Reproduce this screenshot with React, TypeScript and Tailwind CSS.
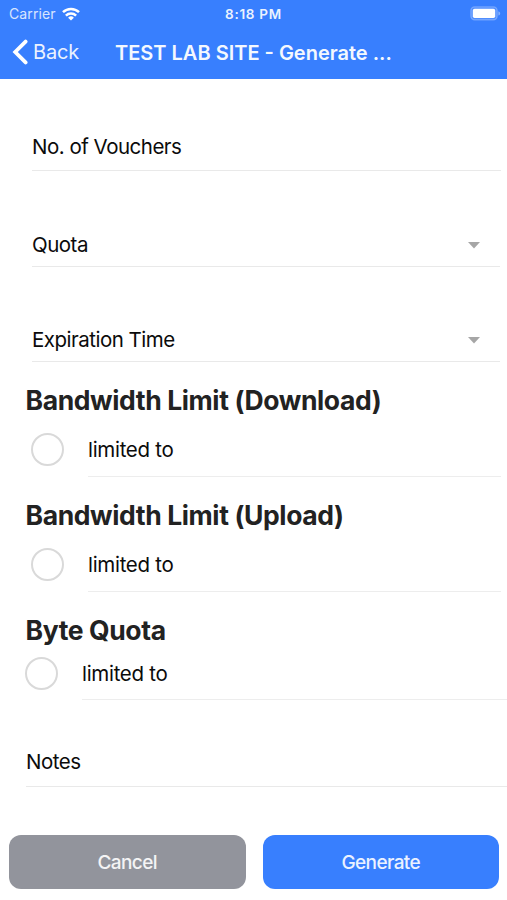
import { ReactNode } from 'react';

interface FieldProps {
  label: string;
  className: string;
  select?: boolean;
}

interface LimitRowProps {
  className: string;
  lineClassName: string;
}

function WifiIcon() {
  return (
    <svg width="18" height="14" viewBox="0 0 18 14" fill="none" stroke="white" strokeWidth="2.5">
      <path d="M1 5.2a11.4 11.4 0 0 1 16 0" />
      <path d="M3.9 8.6a7.3 7.3 0 0 1 10.2 0" />
      <path d="M9 13.6 6.1 10.7a4.1 4.1 0 0 1 5.8 0Z" fill="white" stroke="none" />
    </svg>
  );
}

function BatteryIcon() {
  return (
    <svg width="31" height="15" viewBox="0 0 31 15" fill="none">
      <rect x="0.9" y="0.9" width="26.2" height="13" rx="3.8" fill="white" fillOpacity="0.12" stroke="white" strokeOpacity="0.28" strokeWidth="1.4" />
      <rect x="2.8" y="2.8" width="22.4" height="9.2" rx="1.8" fill="white" />
      <path d="M28.4 5.2c2.4.8 2.4 3.6 0 4.4Z" fill="white" fillOpacity="0.4" />
    </svg>
  );
}

function Field({ label, className, select }: FieldProps) {
  return (
    <div className={`flex items-end justify-between border-b border-[#e9e9e9] ${className}`}>
      <span className="text-[20.5px] leading-[26px] tracking-[-0.5px] text-[#0b0b0b]">{label}</span>
      {select && (
        <svg className="mr-[20px] mb-[9px]" width="12" height="7" viewBox="0 0 12 7">
          <path d="M0 0h12L6 6.6Z" fill="#a6a6a6" />
        </svg>
      )}
    </div>
  );
}

function Heading({ children }: { children: ReactNode }) {
  return (
    <h2 className="ml-[25.5px] text-[26.5px] leading-[32px] font-bold tracking-[-0.38px] text-[#222]">
      {children}
    </h2>
  );
}

function LimitRow({ className, lineClassName }: LimitRowProps) {
  return (
    <div className={`flex ${className}`}>
      <span className="mr-[24px] size-[33px] shrink-0 rounded-full border-2 border-[#d9d9d9]" />
      <div className={`flex-1 border-b border-[#ededed] ${lineClassName}`}>
        <span className="block text-[20.5px] leading-[33px] tracking-[-0.3px] text-[#0b0b0b]">limited to</span>
      </div>
    </div>
  );
}

export default function App() {
  return (
    <div className="flex h-[900px] w-[507px] flex-col overflow-hidden bg-white font-['Inter',sans-serif]">
      <header className="h-[79px] bg-[#387ffe] text-white">
        <div className="grid h-[27px] grid-cols-3 items-center">
          <div className="flex items-center gap-[6px] pl-[9px]">
            <span className="text-[14px] tracking-[0.1px] opacity-80">Carrier</span>
            <WifiIcon />
          </div>
          <span className="pt-px text-center text-[13.5px] font-semibold tracking-[0.7px] opacity-90">8:18 PM</span>
          <div className="flex justify-end pr-[6px]">
            <BatteryIcon />
          </div>
        </div>
        <div className="flex h-[50px] items-center">
          <button className="flex w-[115px] items-center gap-[5px] pl-[12px]">
            <svg width="16" height="26" viewBox="0 0 16 26" fill="none" stroke="white" strokeWidth="3.8">
              <path d="M13.6 2.6 3.2 13 13.6 23.4" strokeLinecap="round" />
            </svg>
            <span className="text-[20px] tracking-[-0.2px] opacity-90">Back</span>
          </button>
          <h1 className="pt-px text-[20px] font-semibold whitespace-nowrap opacity-95">TEST LAB SITE - Generate ...</h1>
        </div>
      </header>

      <main className="flex-1">
        <Field label="No. of Vouchers" className="ml-[32px] mr-[6px] h-[92px] pb-[10px]" />
        <Field label="Quota" className="ml-[32px] mr-[7px] h-[96px] pb-[8px]" select />
        <Field label="Expiration Time" className="ml-[32px] mr-[7px] h-[95px] pb-[8px]" select />

        <div className="h-[115px] pt-[22px]">
          <Heading>Bandwidth Limit (Download)</Heading>
          <LimitRow className="ml-[31px] mr-[6px] mt-[17px]" lineClassName="h-[44px]" />
        </div>
        <div className="h-[115px] pt-[22px]">
          <Heading>Bandwidth Limit (Upload)</Heading>
          <LimitRow className="ml-[31px] mr-[6px] mt-[17px]" lineClassName="h-[44px]" />
        </div>
        <div className="h-[108px] pt-[22px]">
          <Heading>Byte Quota</Heading>
          <LimitRow className="ml-[25px] mt-[11px]" lineClassName="h-[43px]" />
        </div>

        <Field label="Notes" className="ml-[26px] h-[87px] pb-[11px]" />
      </main>

      <footer className="flex h-[65px] gap-[17px] pl-[9px] pr-[8px] text-[19px] font-medium tracking-[-0.6px] text-white">
        <button className="h-[54px] flex-1 rounded-[12px] bg-[#92949c] pt-[2px] text-white/90">Cancel</button>
        <button className="h-[54px] flex-1 rounded-[12px] bg-[#387ffe] pt-[2px] text-white/90">Generate</button>
      </footer>
    </div>
  );
}
